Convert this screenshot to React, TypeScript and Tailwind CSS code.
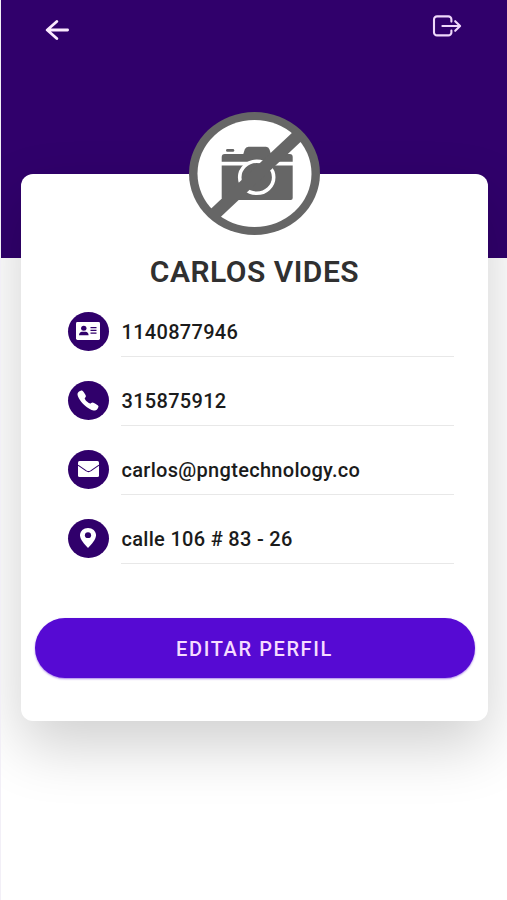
import type { ReactNode } from "react";
import { IoCall } from "react-icons/io5";

interface ProfileRow {
  id: string;
  icon: ReactNode;
  value: string;
}

function IdCardIcon() {
  return (
    <svg viewBox="0 0 24 18" className="h-[18px] w-6">
      <rect width="24" height="18" rx="1.4" fill="currentColor" />
      <g fill="#30006b">
        <ellipse cx="7.8" cy="6.3" rx="2.7" ry="2.5" />
        <path d="M3 13.300c0-2.400 1.400-3.600 3-3.600h3.600c1.600 0 3 1.200 3 3.600z" />
        <path d="M14.500 4.900h6v1.300h-6zM14.500 7.700h6V9h-6zM14.500 10.500h6v1.300h-6z" />
      </g>
    </svg>
  );
}

function MailIcon() {
  return (
    <svg viewBox="0 0 21 16" className="h-4 w-[21px]">
      <rect width="21" height="16" rx="1.5" fill="currentColor" />
      <path
        d="M0 4.200 8.300 9.900q2.200 1.400 4.400 0L21 4.200"
        fill="none"
        stroke="#30006b"
        strokeWidth="1.1"
      />
    </svg>
  );
}

function PinIcon() {
  return (
    <svg viewBox="0 0 16 20" className="h-5 w-4">
      <path
        d="M8 0C3.500 0 0 3.100 0 7.300 0 11.500 4.500 16.500 8 20c3.500-3.500 8-8.500 8-12.700C16 3.100 12.500 0 8 0z"
        fill="currentColor"
      />
      <ellipse cx="8" cy="7.200" rx="3.100" ry="2.900" fill="#30006b" />
    </svg>
  );
}

const rows: ProfileRow[] = [
  { id: "document", icon: <IdCardIcon />, value: "1140877946" },
  {
    id: "phone",
    icon: <IoCall className="h-[23px] w-6" preserveAspectRatio="none" />,
    value: "315875912",
  },
  { id: "email", icon: <MailIcon />, value: "carlos@pngtechnology.co" },
  { id: "address", icon: <PinIcon />, value: "calle 106 # 83 - 26" },
];

function BackIcon() {
  return (
    <svg
      viewBox="0 0 24 20"
      className="h-5 w-6"
      fill="none"
      stroke="currentColor"
      strokeWidth="2.8"
      strokeLinecap="round"
      strokeLinejoin="round"
    >
      <path d="M11.800 1.500 2.200 10l9.600 8.500M2.600 10h20" />
    </svg>
  );
}

function LogoutIcon() {
  return (
    <svg
      viewBox="0 0 30 22"
      className="h-[22px] w-[30px]"
      fill="none"
      stroke="currentColor"
      strokeWidth="2.100"
      strokeLinecap="round"
      strokeLinejoin="round"
    >
      <path d="M19.400 6.600V4.400a3 3 0 0 0-3-3H5a3 3 0 0 0-3 3v13a3 3 0 0 0 3 3h11.400a3 3 0 0 0 3-3v-1.900" />
      <path d="M10.400 11h17.200M23.200 6.200l4.900 4.800-4.900 4.800" />
    </svg>
  );
}

function NoPhoto() {
  return (
    <svg viewBox="0 0 131 123" className="h-[123px] w-[131px]">
      <ellipse cx="65.500" cy="61.500" rx="65.500" ry="61.500" fill="#666" />
      <ellipse cx="65.500" cy="61.500" rx="57" ry="53.500" fill="#fff" />
      <rect x="37" y="37" width="8.300" height="2.800" rx="1.400" fill="#666" />
      <path
        d="M32.700 49.700V45a3 3 0 0 1 3-3h18.600l1.500-4.800q1-2.500 3.700-2.500h17.500q2.700 0 3.400 2.500l1.600 4.800h18.700a3 3 0 0 1 3 3v4.700z"
        fill="#666"
      />
      <path
        d="M32.700 53.500h71v32.500a2 2 0 0 1-2 2h-67a2 2 0 0 1-2-2z"
        fill="#666"
      />
      <ellipse
        cx="67.700"
        cy="65.300"
        rx="17"
        ry="16"
        fill="#666"
        stroke="#fff"
        strokeWidth="3.600"
      />
      {/* the slash hides the lens ring on both sides */}
      <path d="M22 105.300 112 21" stroke="#666" strokeWidth="12.600" />
    </svg>
  );
}

export default function App() {
  return (
    <div className="h-[900px] w-full overflow-hidden border-l border-[#f2eff7] bg-white font-['Roboto',sans-serif]">
      <header className="h-[258px] bg-[#30006b]">
        <div className="flex items-start justify-between pl-[44px] pr-[45px] text-[#fbeaff]">
          <button aria-label="Volver" className="mt-5">
            <BackIcon />
          </button>
          <button aria-label="Cerrar sesión" className="mt-[15px] text-[#efd8fb]">
            <LogoutIcon />
          </button>
        </div>
      </header>

      <main className="-mt-[84px] ml-5 mr-[19px] flex h-[547px] flex-col items-center rounded-xl bg-white shadow-[0_25px_60px_rgba(0,0,0,0.19)]">
        <div className="-mt-[62px]">
          <NoPhoto />
        </div>

        <h1 className="mt-[19px] text-[30px] font-semibold leading-9 tracking-[0.5px] text-[#303030]">
          CARLOS VIDES
        </h1>

        <ul className="mt-[16px] w-full pl-[46.5px] pr-[34px]">
          {rows.map((row) => (
            <li key={row.id} className="flex h-[69px] items-start gap-3">
              <span className="mt-[5.5px] flex h-[39px] w-[41px] shrink-0 items-center justify-center rounded-[50%] bg-[#30006b] text-white">
                {row.icon}
              </span>
              <span className="flex h-[51px] flex-1 items-center border-b border-[#e8e8e8] pt-px pl-px text-[20px] font-medium tracking-[0.3px] text-[#1b1b1b]">
                {row.value}
              </span>
            </li>
          ))}
        </ul>

        <button className="mt-[36px] h-[60px] w-[440px] rounded-full bg-[#560ad3] pt-px text-[20px] font-medium tracking-[1.6px] text-[#f6dcff] shadow-[0_1px_2px_rgba(86,10,211,0.5)]">
          EDITAR PERFIL
        </button>
      </main>
    </div>
  );
}
